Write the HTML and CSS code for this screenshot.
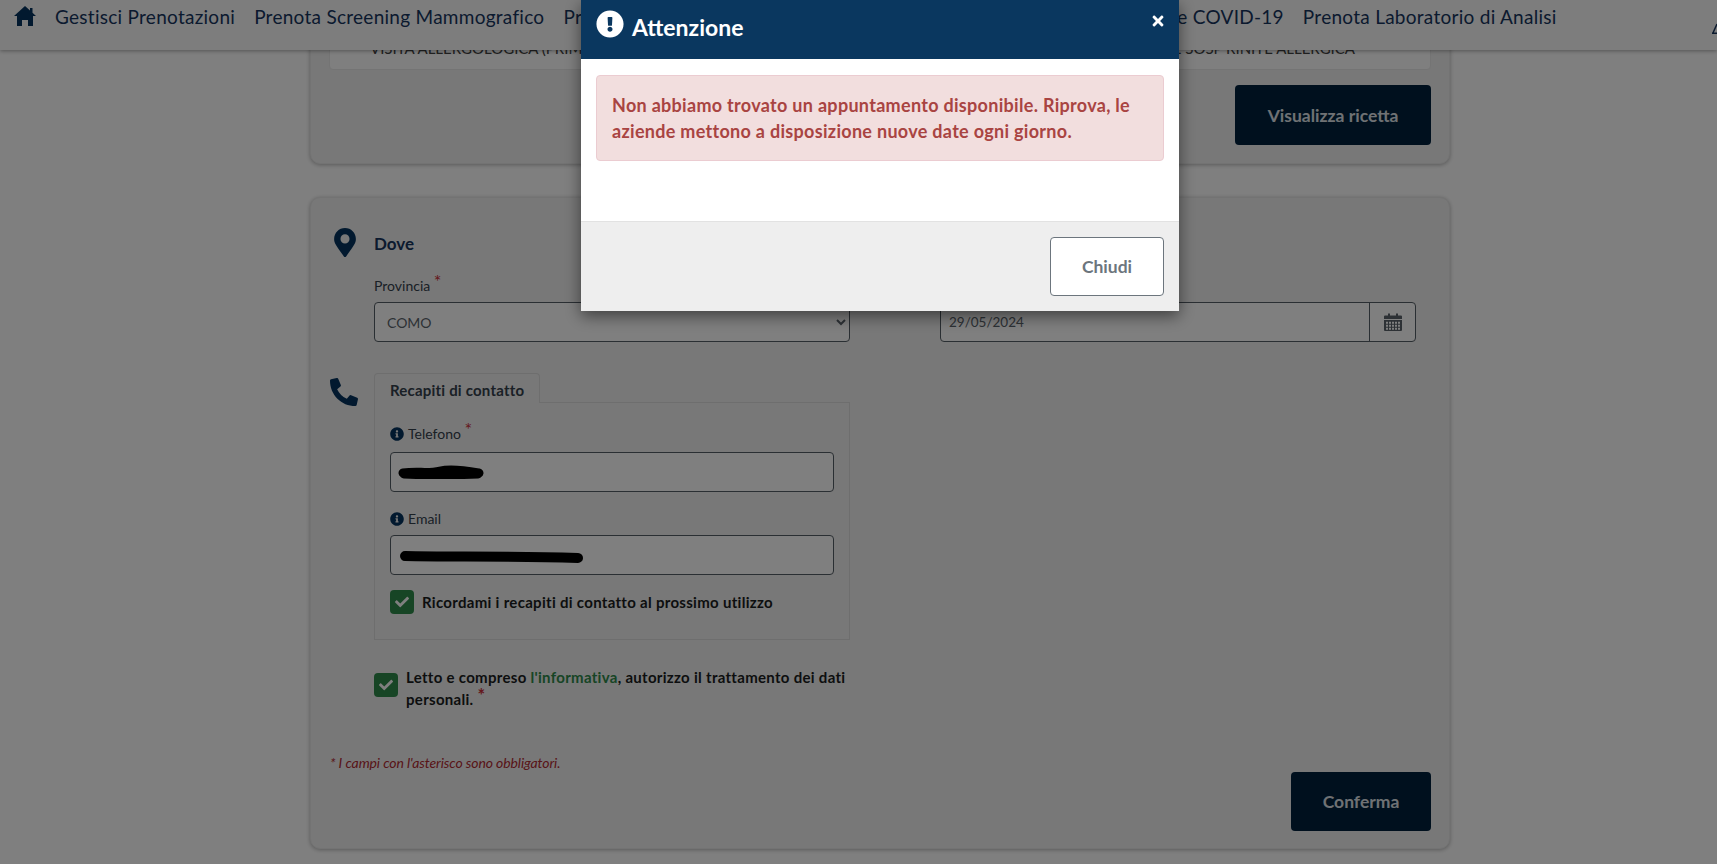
FILE: index.html
```html
<!DOCTYPE html>
<html lang="it">
<head>
<meta charset="utf-8">
<title>Prenotazione</title>
<link rel="stylesheet" href="styles.css">
</head>
<body>
<nav class="nav">
  <svg class="home" viewBox="0 0 22 20"><path d="M11 0l5 4.500V2h2.500v4.800L22 10h-3v10h-5v-6H8v6H3V10H0z"/></svg>
  <a class="nav-link">Gestisci Prenotazioni</a>
  <a class="nav-link">Prenota Screening Mammografico</a>
  <a class="nav-link">Prenota Visita od Esame</a>
  <a class="nav-link">Prenota Vaccino Antinfluenzale e Vaccinazione COVID-19</a>
  <a class="nav-link">Prenota Laboratorio di Analisi</a>
  <svg class="nav-cut" viewBox="0 0 5 11"><path d="M0.500 11 5 1M0 10.300h5"/></svg>
</nav>
<main class="main">
  <section class="card card-top">
    <div class="rx-box">
      <span>VISITA ALLERGOLOGICA (PRIMA VISITA)</span>
      <span>DIAGNOSI: E SOSP RINITE ALLERGICA</span>
    </div>
    <div class="actions"><button class="btn-primary btn-wide">Visualizza ricetta</button></div>
  </section>
  <section class="card card-form">
    <div class="row row-dove">
      <svg class="ico-pin" viewBox="0 0 384 512"><path d="M172.268 501.67C26.97 291.031 0 268.413 0 192 0 85.961 85.961 0 192 0s192 85.961 192 192c0 76.413-26.97 99.031-172.268 309.67-9.535 13.774-29.93 13.773-39.464 0zM192 272c44.183 0 80-35.817 80-80s-35.817-80-80-80-80 35.817-80 80 35.817 80 80 80z"/></svg>
      <div class="row-body">
        <h3 class="title">Dove</h3>
        <div class="two-col">
          <div>
            <label class="label">Provincia <span class="req">*</span></label>
            <select class="field field-select"><option>COMO</option></select>
          </div>
          <div>
            <label class="label">A partire dal <span class="req">*</span></label>
            <div class="date-group">
              <input class="date-input" value="29/05/2024">
              <span class="date-addon">
                <svg class="ico-cal" viewBox="0 0 18 18"><path d="M4 0.500h2v2h6v-2h2v2h3a1 1 0 0 1 1 1v2.500H0V3.500a1 1 0 0 1 1-1h3z"/><path fill-rule="evenodd" d="M0 7h18v10a1 1 0 0 1-1 1H1a1 1 0 0 1-1-1zM2 8.700v2h2v-2zm3 0v2h2v-2zm3 0v2h2v-2zm3 0v2h2v-2zm3 0v2h2v-2zM2 11.700v2h2v-2zm3 0v2h2v-2zm3 0v2h2v-2zm3 0v2h2v-2zm3 0v2h2v-2zM2 14.700v2h2v-2zm3 0v2h2v-2zm3 0v2h2v-2zm3 0v2h2v-2zm3 0v2h2v-2z"/></svg>
              </span>
            </div>
          </div>
        </div>
      </div>
    </div>
    <div class="row row-contact">
      <svg class="ico-phone" viewBox="0 0 512 512"><path d="M497.39 361.8l-112-48a24 24 0 0 0-28 6.9l-49.6 60.6A370.66 370.66 0 0 1 130.6 204.11l60.6-49.6a23.94 23.94 0 0 0 6.9-28l-48-112A24.16 24.16 0 0 0 122.6.61l-104 24A24 24 0 0 0 0 48c0 256.5 207.9 464 464 464a24 24 0 0 0 23.4-18.6l24-104a24.29 24.29 0 0 0-14.01-27.6z"/></svg>
      <div class="row-body">
        <div class="tab">Recapiti di contatto</div>
        <div class="tab-box">
          <label class="label label-info">
            <svg class="ico-info" viewBox="0 0 512 512"><path d="M256 8C119.043 8 8 119.083 8 256c0 136.997 111.043 248 248 248s248-111.003 248-248C504 119.083 392.957 8 256 8zm0 110c23.196 0 42 18.804 42 42s-18.804 42-42 42-42-18.804-42-42 18.804-42 42-42zm56 254c0 6.627-5.373 12-12 12h-88c-6.627 0-12-5.373-12-12v-24c0-6.627 5.373-12 12-12h12v-64h-12c-6.627 0-12-5.373-12-12v-24c0-6.627 5.373-12 12-12h64c6.627 0 12 5.373 12 12v100h12c6.627 0 12 5.373 12 12v24z"/></svg>
            <span>Telefono <span class="req">*</span></span>
          </label>
          <div class="field field-redacted">
            <svg class="scribble scribble-tel" viewBox="0 0 86 14"><path d="M5 8C20 6 30 9 42 6S70 6 81 8M6 9c20 1 50 1 74 0"/></svg>
          </div>
          <label class="label label-info label-email">
            <svg class="ico-info" viewBox="0 0 512 512"><path d="M256 8C119.043 8 8 119.083 8 256c0 136.997 111.043 248 248 248s248-111.003 248-248C504 119.083 392.957 8 256 8zm0 110c23.196 0 42 18.804 42 42s-18.804 42-42 42-42-18.804-42-42 18.804-42 42-42zm56 254c0 6.627-5.373 12-12 12h-88c-6.627 0-12-5.373-12-12v-24c0-6.627 5.373-12 12-12h12v-64h-12c-6.627 0-12-5.373-12-12v-24c0-6.627 5.373-12 12-12h64c6.627 0 12 5.373 12 12v100h12c6.627 0 12 5.373 12 12v24z"/></svg>
            <span>Email</span>
          </label>
          <div class="field field-redacted">
            <svg class="scribble scribble-mail" viewBox="0 0 184 14"><path d="M5 6C50 7 100 6 178 8"/></svg>
          </div>
          <div class="check-row check-remember">
            <span class="check"><svg viewBox="0 0 512 512"><path d="M173.898 439.404l-166.4-166.4c-9.997-9.997-9.997-26.206 0-36.204l36.203-36.204c9.997-9.998 26.207-9.998 36.204 0L192 312.69 432.095 72.596c9.997-9.997 26.207-9.997 36.204 0l36.203 36.204c9.997 9.997 9.997 26.206 0 36.204l-294.4 294.401c-9.998 9.997-26.207 9.997-36.204-.001z"/></svg></span>
            <span class="check-text">Ricordami i recapiti di contatto al prossimo utilizzo</span>
          </div>
        </div>
        <div class="check-row check-privacy">
          <span class="check"><svg viewBox="0 0 512 512"><path d="M173.898 439.404l-166.4-166.4c-9.997-9.997-9.997-26.206 0-36.204l36.203-36.204c9.997-9.998 26.207-9.998 36.204 0L192 312.69 432.095 72.596c9.997-9.997 26.207-9.997 36.204 0l36.203 36.204c9.997 9.997 9.997 26.206 0 36.204l-294.4 294.401c-9.998 9.997-26.207 9.997-36.204-.001z"/></svg></span>
          <span class="check-text">Letto e compreso <a class="link-green">l'informativa</a>, autorizzo il trattamento dei dati personali. <span class="req">*</span></span>
        </div>
      </div>
    </div>
    <p class="note">* I campi con l'asterisco sono obbligatori.</p>
    <div class="actions actions-form"><button class="btn-primary btn-confirm">Conferma</button></div>
  </section>
</main>
<div class="backdrop"></div>
<div class="modal">
  <header class="modal-head">
    <svg class="ico-alert" viewBox="0 0 512 512"><path d="M504 256c0 136.997-111.043 248-248 248S8 392.997 8 256C8 119.083 119.043 8 256 8s248 111.083 248 248zm-248 50c-25.405 0-46 20.595-46 46s20.595 46 46 46 46-20.595 46-46-20.595-46-46-46zm-43.673-165.346l7.418 136c.347 6.364 5.609 11.346 11.982 11.346h48.546c6.373 0 11.635-4.982 11.982-11.346l7.418-136c.375-6.874-5.098-12.654-11.982-12.654h-63.383c-6.884 0-12.356 5.78-11.981 12.654z"/></svg>
    <h2 class="modal-title">Attenzione</h2>
    <svg class="ico-close" viewBox="0 0 352 512"><path d="M242.72 256l100.07-100.07c12.28-12.28 12.28-32.19 0-44.48l-22.24-22.24c-12.28-12.28-32.19-12.28-44.48 0L176 189.28 75.93 89.21c-12.28-12.28-32.19-12.28-44.48 0L9.21 111.45c-12.28 12.28-12.28 32.19 0 44.48L109.28 256 9.21 356.07c-12.28 12.28-12.28 32.19 0 44.48l22.24 22.24c12.28 12.28 32.2 12.28 44.48 0L176 322.72l100.07 100.07c12.28 12.28 32.2 12.28 44.48 0l22.24-22.24c12.28-12.28 12.28-32.19 0-44.48L242.72 256z"/></svg>
  </header>
  <div class="modal-body">
    <div class="alert">Non abbiamo trovato un appuntamento disponibile. Riprova, le aziende mettono a disposizione nuove date ogni giorno.</div>
  </div>
  <footer class="modal-foot"><button class="btn-close">Chiudi</button></footer>
</div>
</body>
</html>
```
FILE: styles.css
```css
* { box-sizing: border-box; }
html, body { margin: 0; height: 100%; overflow: hidden; }
body {
  background: #fff;
  font-family: "Lato", "Open Sans", sans-serif;
  color: #212529;
  display: flex;
  flex-direction: column;
}
.nav {
  flex: none;
  height: 50px;
  background: #fafafa;
  box-shadow: 0 1px 4px rgba(0,0,0,.35);
  display: flex;
  align-items: flex-start;
  padding: 5px 0 0 14px;
  gap: 19px;
  position: relative;
  z-index: 2;
  overflow: hidden;
}
.home { width: 22px; height: 20px; fill: #04335e; flex: none; margin: 1px 0 0 0; }
.nav-link { font-size: 19px; letter-spacing: .27px; line-height: 24px; color: #17355e; white-space: nowrap; }
.nav-cut { width: 5px; height: 11px; fill: none; stroke: #17355e; stroke-width: 1.5; margin: 18px 0 0 auto; flex: none; }
.main {
  flex: 1;
  width: 1140px;
  margin-left: 310px;
}
.card {
  background: #f0f0f0;
  border: 1px solid #e6e6e6;
  border-radius: 10px;
  box-shadow: 0 1px 4px rgba(0,0,0,.3);
  padding: 0 18px;
}
.card-top { height: 171px; margin-top: -57px; padding-top: 30px; }
.rx-box {
  height: 46px;
  background: #fff;
  border: 1px solid #e8e8e8;
  border-radius: 4px;
  display: flex;
  justify-content: space-between;
  align-items: flex-end;
  padding: 0 75px 12px 40px;
  font-size: 15px;
  color: #444;
}
.actions { display: flex; justify-content: flex-end; }
.card-top .actions { margin-top: 15px; }
.btn-primary {
  background: #00213d;
  color: #dfe3e8;
  border: 0;
  border-radius: 4px;
  font: 700 17.500px "Lato", sans-serif;
}
.btn-wide { width: 196px; height: 60px; }
.btn-confirm { width: 140px; height: 59px; }
.card-form { height: 652px; margin-top: 33px; padding-top: 30px; }
.row { display: flex; }
.row-body { width: 1042px; }
.ico-pin { width: 22px; height: 29px; fill: #04335e; flex: none; margin: 0 18px 0 5px; }
.title { margin: 4px 0 0; font-size: 17px; line-height: 24px; font-weight: 700; color: #17355e; }
.two-col { display: grid; grid-template-columns: 476px 476px; column-gap: 90px; margin-top: 20px; }
.label { display: block; font-size: 14px; line-height: 20px; color: #34404c; height: 20px; }
.req { color: #c9303a; font-size: 18px; position: relative; top: -3px; line-height: 10px; }
.field {
  display: block;
  width: 100%;
  height: 40px;
  border: 1px solid #555e66;
  border-radius: 4px;
  background: #fff;
}
.field-select { margin-top: 6px; padding: 0 8px; font: 14px "Lato", sans-serif; color: #5a636b; }
.date-group { display: flex; height: 40px; margin-top: 6px; border: 1px solid #555e66; border-radius: 4px; background: #fff; }
.date-input { flex: 1; min-width: 0; border: 0; background: none; padding: 0 8px; font: 13.500px "Lato", sans-serif; color: #5a636b; }
.date-addon { width: 46px; border-left: 1px solid #555e66; display: flex; align-items: center; justify-content: center; }
.ico-cal { width: 18px; height: 18px; fill: #5a636b; }
.row-contact { margin-top: 31px; }
.ico-phone { width: 28px; height: 28px; fill: #04335e; flex: none; margin: 5px 16px 0 1px; }
.tab {
  width: 166px;
  height: 30px;
  background: #f0f0f0;
  border: 1px solid #dcdcdc;
  border-bottom: 0;
  border-radius: 4px 4px 0 0;
  font-size: 15px;
  font-weight: 700;
  letter-spacing: .2px;
  line-height: 33px;
  padding-left: 15px;
  color: #34404c;
  position: relative;
  z-index: 1;
  margin-bottom: -1px;
}
.tab-box { width: 476px; height: 238px; border: 1px solid #dcdcdc; padding: 21px 15px 0; background: #f0f0f0; }
.label-info { display: flex; align-items: center; gap: 4px; }
.ico-info { width: 14px; height: 14px; fill: #04335e; }
.field-redacted { margin-top: 8px; display: flex; align-items: center; }
.label-email { margin-top: 17px; }
.label-email + .field { margin-top: 6px; }
.scribble { fill: none; stroke: #000; stroke-linecap: round; display: block; }
.scribble-tel { width: 86px; height: 14px; margin-left: 7px; stroke-width: 9; }
.scribble-mail { width: 184px; height: 14px; margin-left: 9px; stroke-width: 10; margin-top: 4px; }
.check-row { display: flex; gap: 8px; }
.check {
  flex: none;
  width: 24px;
  height: 24px;
  background: #2f8a4a;
  border-radius: 4px;
  display: flex;
  align-items: center;
  justify-content: center;
}
.check svg { width: 14px; height: 14px; fill: #fff; }
.check-text { font-size: 15px; font-weight: 700; letter-spacing: .3px; line-height: 22px; color: #1a1d20; }
.check-remember { margin-top: 15px; align-items: center; }
.check-privacy { margin-top: 26px; width: 476px; align-items: flex-start; }
.check-privacy .check { margin-top: 7px; }
.link-green { color: #2f8a4a; }
.note {
  margin: 44px 0 0 1px;
  font-size: 14px;
  font-style: italic;
  letter-spacing: -.1px;
  color: #b02a30;
}
.actions-form { margin-top: 1px; }
.backdrop {
  position: fixed;
  inset: 0;
  background: rgba(0,0,0,.5);
  z-index: 5;
}
.modal {
  position: fixed;
  top: 0;
  left: 581px;
  width: 598px;
  height: 311px;
  background: #fff;
  z-index: 6;
  box-shadow: 0 5px 15px rgba(0,0,0,.5);
  display: flex;
  flex-direction: column;
}
.modal-head {
  height: 59px;
  background: #0a375f;
  color: #fff;
  display: flex;
  align-items: flex-start;
  padding: 10px 15px 0 15px;
  flex: none;
}
.ico-alert { width: 28px; height: 28px; fill: #fff; flex: none; }
.modal-title { margin: 2px 0 0 8px; font-size: 23px; line-height: 30px; font-weight: 700; }
.ico-close { width: 12px; height: 16px; fill: #fff; margin: 3px 0 0 auto; }
.modal-body { flex: 1; padding: 16px 15px 0; }
.alert {
  height: 86px;
  background: #f2dede;
  border: 1px solid #ebccd1;
  border-radius: 4px;
  color: #a94442;
  font-size: 18px;
  font-weight: 700;
  letter-spacing: .3px;
  line-height: 26px;
  padding: 16px 15px;
}
.modal-foot {
  flex: none;
  height: 90px;
  background: #eee;
  border-top: 1px solid #e2e2e2;
  display: flex;
  justify-content: flex-end;
  padding: 15px;
}
.btn-close {
  width: 114px;
  height: 59px;
  background: #fff;
  border: 1px solid #6c757d;
  border-radius: 4px;
  color: #6c757d;
  font: 700 17.500px "Lato", sans-serif;
}
```
